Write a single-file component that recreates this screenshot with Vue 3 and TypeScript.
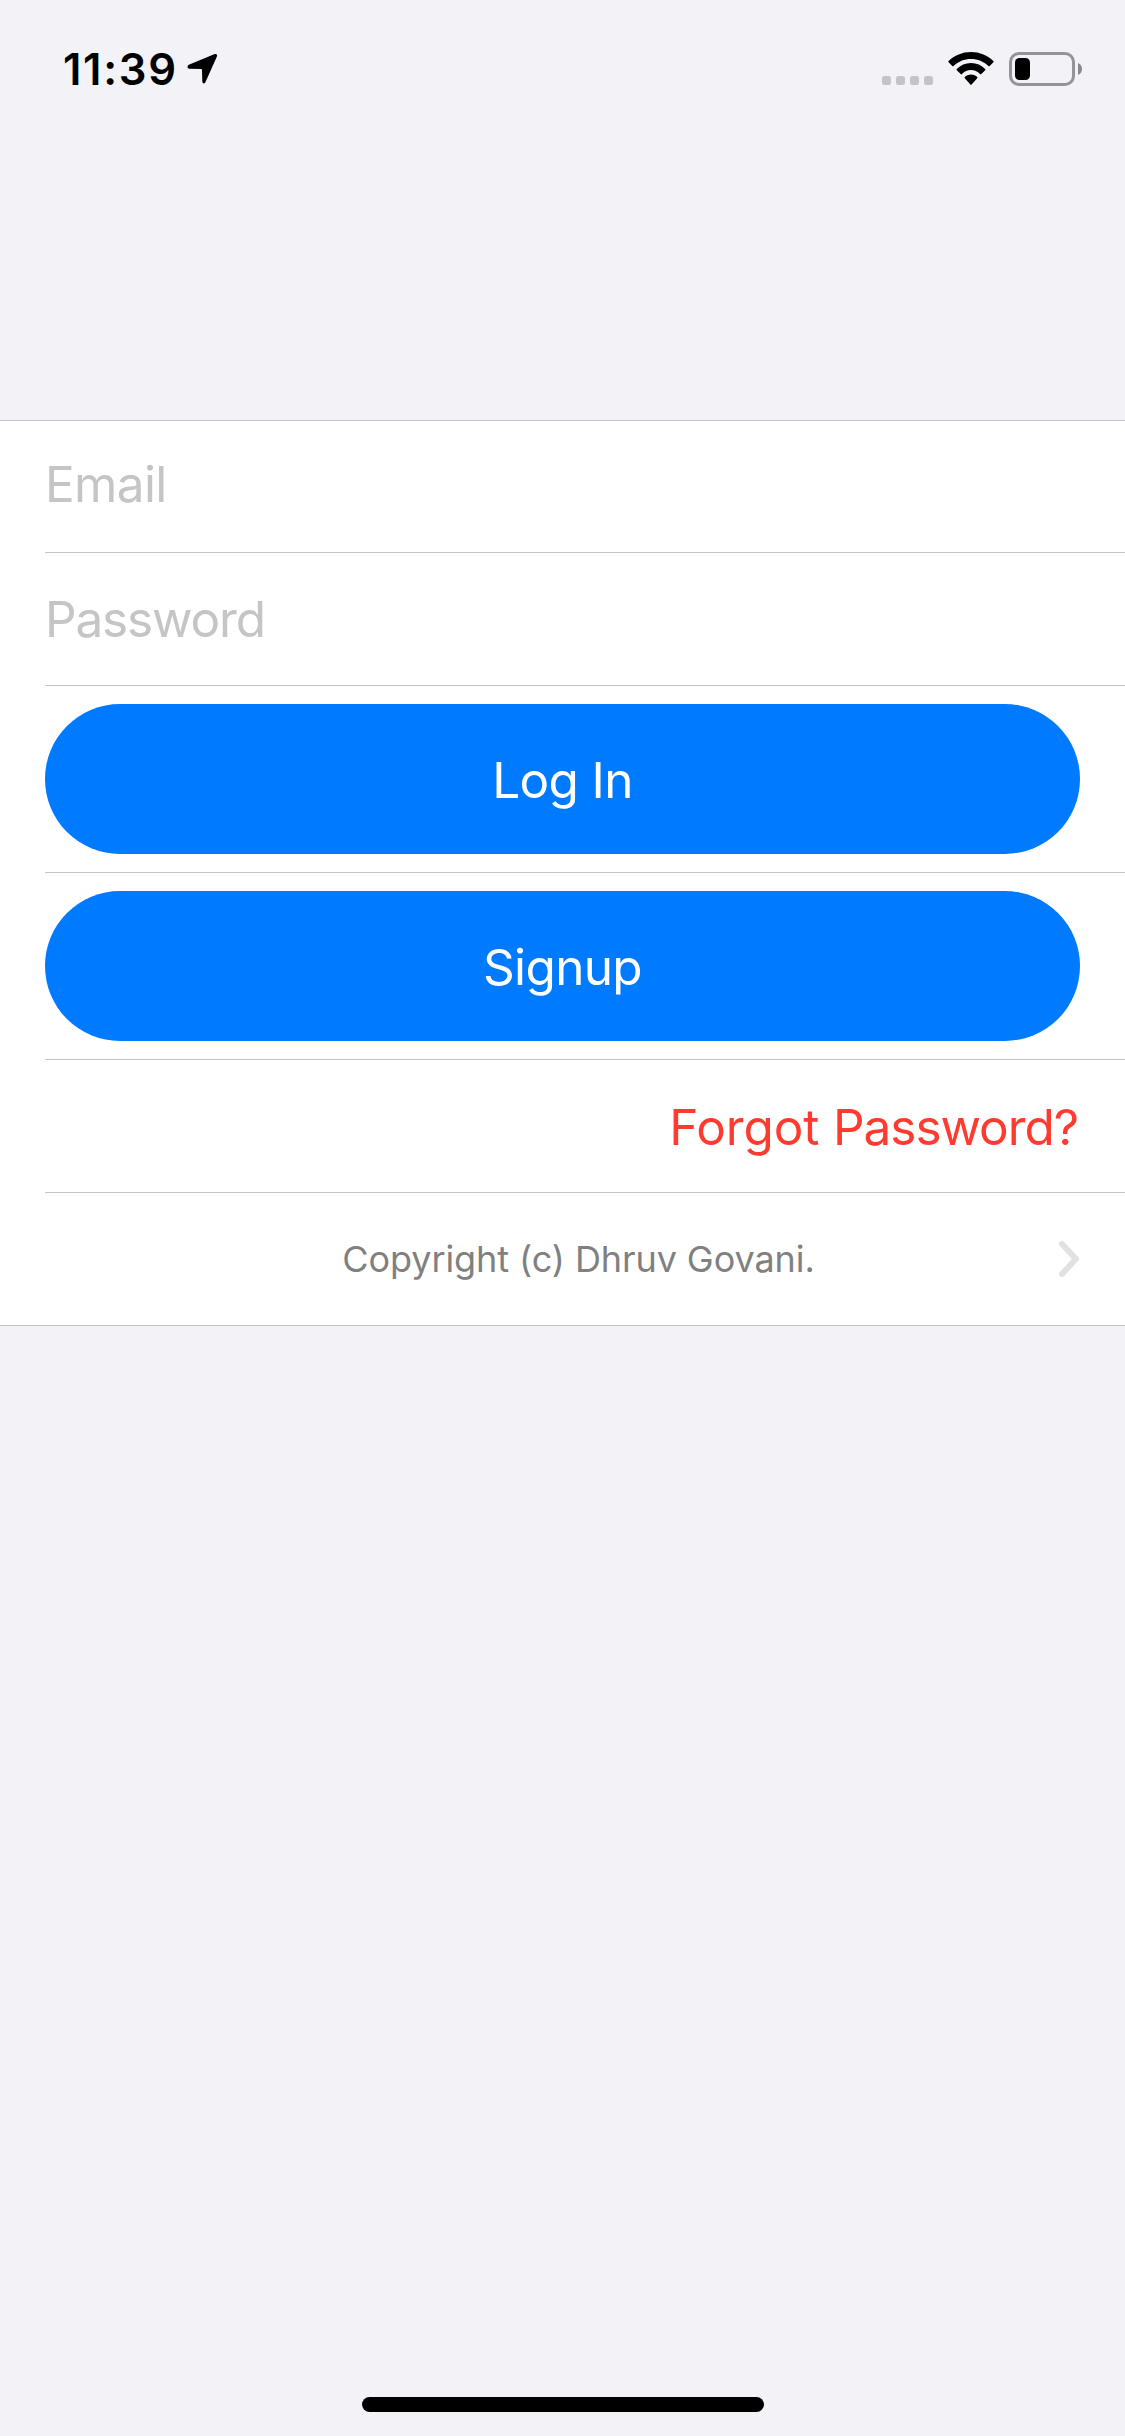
<script setup lang="ts">
interface Action {
  id: string
  label: string
}

const fields: Action[] = [
  { id: 'email', label: 'Email' },
  { id: 'password', label: 'Password' },
]

const actions: Action[] = [
  { id: 'login', label: 'Log In' },
  { id: 'signup', label: 'Signup' },
]
</script>

<template>
  <div class="screen">
    <header class="status">
      <div class="clock">
        <span class="time">11:39</span>
        <svg class="location" width="32" height="32" viewBox="0 0 32 32">
          <path d="M27.800 1.100 1.800 11.700C0 12.600.2 15.600 2.400 15.700L14 16Q15 16 15 17L15.300 28.600C15.400 30.700 17.600 31 18.400 29.300L29.900 3.600C30.600 1.900 29.500.5 27.800 1.100Z" fill="#000" />
        </svg>
      </div>
      <div class="indicators">
        <div class="signal"><i v-for="n in 4" :key="n" /></div>
        <svg class="wifi" width="46" height="34" viewBox="0 0 46 34">
          <path d="M23 0C31.800 0 39.700 3.400 45.400 9.100Q46 9.700 45.400 10.300L41.700 14Q41.100 14.500 40.500 14C35.900 9.500 29.700 6.900 23 6.900S10.100 9.500 5.500 14Q4.900 14.500 4.300 14L.6 10.300Q0 9.700.6 9.100C6.300 3.400 14.200 0 23 0Z" />
          <path d="M23 11.100C28.700 11.100 33.400 13.400 37.200 16.900Q37.800 17.600 37.200 18.200L33.300 22.100Q32.700 22.700 32 22.100C29.600 19.600 26.500 18.100 23 18.100S16.400 19.600 14 22.100Q13.300 22.700 12.700 22.100L8.800 18.200Q8.200 17.600 8.800 16.900C12.600 13.400 17.300 11.100 23 11.100Z" />
          <path d="M23 22.500C25.700 22.500 27.800 23.600 29.200 25Q29.800 25.600 29.200 26.200L23.600 32.600Q23 33.200 22.400 32.600L16.800 26.200Q16.200 25.600 16.800 25C18.200 23.600 20.300 22.500 23 22.500Z" />
        </svg>
        <div class="battery">
          <div class="shell"><div class="charge" /></div>
          <svg width="4" height="12" viewBox="0 0 4 12"><path d="M0 0C2.500 1 4 3.300 4 6S2.500 11 0 12Z" fill="#8a8a8e" /></svg>
        </div>
      </div>
    </header>

    <main class="form">
      <div v-for="f in fields" :key="f.id" class="row" :class="f.id">
        <label class="placeholder">{{ f.label }}</label>
      </div>
      <div v-for="a in actions" :key="a.id" class="row action">
        <button class="pill" :class="a.id" type="button"><span>{{ a.label }}</span></button>
      </div>
      <div class="row forgot"><a>Forgot <span class="tight">Password?</span></a></div>
      <div class="row about">
        <span class="copyright">Copyright (c) Dhruv Govani.</span>
        <svg class="chevron" width="22" height="38" viewBox="0 0 22 38">
          <path d="M4 4 18 19 4 34" fill="none" stroke="#e1e1e1" stroke-width="6" stroke-linecap="round" stroke-linejoin="round" />
        </svg>
      </div>
    </main>

    <footer class="home"><div class="bar" /></footer>
  </div>
</template>

<style>
body {
  margin: 0;
  background: #f2f2f7;
}
</style>

<style scoped>
* {
  box-sizing: border-box;
}

.screen {
  width: 1125px;
  height: 2436px;
  display: flex;
  flex-direction: column;
  background: #f2f2f7;
  font-family: Inter, "Liberation Sans", sans-serif;
  font-size: 49.5px;
  line-height: 60px;
  letter-spacing: -0.65px;
  white-space: nowrap;
}

svg {
  display: block;
}

.status {
  height: 420px;
  display: flex;
  justify-content: space-between;
  align-items: flex-start;
  padding: 39px 43px 0 63px;
}

.clock {
  display: flex;
  gap: 9px;
}

.time {
  width: 115px;
  font-size: 43.5px;
  font-weight: 600;
  font-kerning: none;
  letter-spacing: 1.7px;
}

.location {
  margin-top: 14px;
}

.indicators {
  display: flex;
  height: 34px;
  margin-top: 13px;
}

.signal {
  display: flex;
  gap: 5px;
  margin: 24px 15px 0 0;
}

.signal i {
  width: 9px;
  height: 9px;
  border-radius: 2.5px;
  background: #c4c3c8;
}

.battery {
  display: flex;
  align-items: center;
  gap: 3px;
  margin-left: 15px;
}

.shell {
  width: 66px;
  height: 34px;
  padding: 3px;
  border: 3px solid #949397;
  border-radius: 10px;
}

.charge {
  width: 15px;
  height: 22px;
  border-radius: 4.5px;
  background: #000;
}

.form {
  height: 906px;
  background: #fff;
  border-top: 1px solid #c4c4c6;
  border-bottom: 1px solid #c4c4c6;
}

.row {
  height: 133px;
  margin-left: 45px;
  padding-right: 45px;
  display: flex;
  align-items: center;
  border-bottom: 1px solid #c4c4c6;
}

.email {
  height: 132px;
  padding-bottom: 5px;
}

.placeholder {
  color: #c5c5c7;
}

.password .placeholder {
  letter-spacing: -1.15px;
}

.action {
  height: 187px;
}

.pill {
  width: 1035px;
  height: 150px;
  padding: 2px 0 0;
  border: 0;
  border-radius: 75px;
  background: #007aff;
  color: #fff;
  font: inherit;
  letter-spacing: inherit;
}

.forgot {
  justify-content: flex-end;
  padding-top: 2px;
  padding-right: 47px;
  color: #ff3b30;
  letter-spacing: -0.15px;
}

.tight {
  letter-spacing: -1.05px;
}

.about {
  height: 132px;
  border-bottom: 0;
}

.copyright {
  flex: 1;
  padding-left: 54px;
  text-align: center;
  color: #808080;
  font-size: 36px;
  letter-spacing: -0.08px;
}

.home {
  flex: 1;
  display: flex;
  justify-content: center;
  align-items: flex-end;
  padding-bottom: 24px;
}

.bar {
  width: 402px;
  height: 15px;
  border-radius: 8px;
  background: #000;
}
</style>
